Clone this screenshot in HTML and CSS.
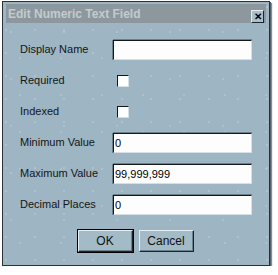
FILE: index.html
```html
<!DOCTYPE html>
<html>
<head>
<meta charset="utf-8">
<link rel="stylesheet" href="styles.css">
</head>
<body>
<div class="dialog">
  <div class="titlebar">
    <span class="title">Edit Numeric Text Field</span>
    <span class="close">✕</span>
  </div>
  <div class="form">
    <label class="lbl">Display Name</label>
    <div class="field"></div>
    <label class="lbl">Required</label>
    <div class="cell"><span class="check"></span></div>
    <label class="lbl">Indexed</label>
    <div class="cell"><span class="check"></span></div>
    <label class="lbl">Minimum Value</label>
    <div class="field">0</div>
    <label class="lbl">Maximum Value</label>
    <div class="field">99,999,999</div>
    <label class="lbl">Decimal Places</label>
    <div class="field">0</div>
  </div>
  <div class="buttons">
    <div class="btn default">OK</div>
    <div class="btn">Cancel</div>
  </div>
</div>
</body>
</html>
```
FILE: styles.css
```css
html, body {
  margin: 0;
  padding: 0;
  background: #ffffff;
}
body {
  font-family: "Liberation Sans", Arial, sans-serif;
  font-size: 11px;
  color: #111;
}
.dialog {
  box-sizing: border-box;
  margin: 1px 0 0 2px;
  width: 268px;
  height: 265px;
  border: 1px solid #2b3236;
  box-shadow: 1px 1px 0 #55606a, 2px 2px 1px rgba(0,0,0,0.45);
  background-color: #9eb6c4;
  background-image:
    radial-gradient(circle at 3px 5px, rgba(255,255,255,0.35) 0.5px, transparent 0.9px),
    radial-gradient(circle at 17px 19px, rgba(255,255,255,0.3) 0.5px, transparent 0.9px),
    radial-gradient(circle at 8px 30px, rgba(255,255,255,0.3) 0.5px, transparent 0.9px);
  background-size: 29px 23px, 41px 37px, 53px 47px;
  padding: 2px 3px;
  display: flex;
  flex-direction: column;
}
.titlebar {
  height: 19px;
  background: #8c989d;
  display: flex;
  align-items: center;
  justify-content: space-between;
  padding: 0 2px 0 2px;
}
.title {
  font-weight: bold;
  font-size: 12px;
  color: #c3cbcf;
}
.close {
  box-sizing: border-box;
  width: 13px;
  height: 13px;
  margin-top: 5px;
  background: #a9c0cc;
  border: 1px solid;
  border-color: #e4eef3 #1e2427 #1e2427 #e4eef3;
  font-size: 10px;
  font-weight: bold;
  line-height: 11px;
  text-align: center;
  color: #000;
}
.form {
  margin-top: 17px;
  padding-left: 14px;
  display: grid;
  grid-template-columns: 93px 139px;
  grid-auto-rows: 20px;
  row-gap: 11px;
  align-items: center;
}
.lbl {
  color: #151515;
  margin-top: -3px;
}
.field {
  box-sizing: border-box;
  height: 20px;
  background: #fdfdfd;
  border: 1px solid;
  border-color: #14181a #d4e0e6 #d4e0e6 #14181a;
  box-shadow: 0 -1px 0 #6c808b, -1px 0 0 #6c808b;
  padding: 2px 1px;
  line-height: 14px;
  color: #000;
}
.cell {
  height: 20px;
  display: flex;
  align-items: center;
}
.check {
  box-sizing: border-box;
  margin-left: 4px;
  width: 12px;
  height: 12px;
  background: #fff;
  border: 1px solid;
  border-color: #14181a #d4e0e6 #d4e0e6 #14181a;
}
.buttons {
  margin-top: 15px;
  display: flex;
  justify-content: center;
  gap: 6px;
  padding-right: 1px;
}
.btn {
  box-sizing: border-box;
  width: 55px;
  height: 22px;
  background: #a3bac7;
  border: 1px solid;
  border-color: #e4eef3 #1e2427 #1e2427 #e4eef3;
  box-shadow: inset -1px -1px 0 #6c808b;
  display: flex;
  align-items: center;
  justify-content: center;
  font-size: 12px;
  color: #111;
}
.btn.default {
  outline: 1px solid #000;
}
```
